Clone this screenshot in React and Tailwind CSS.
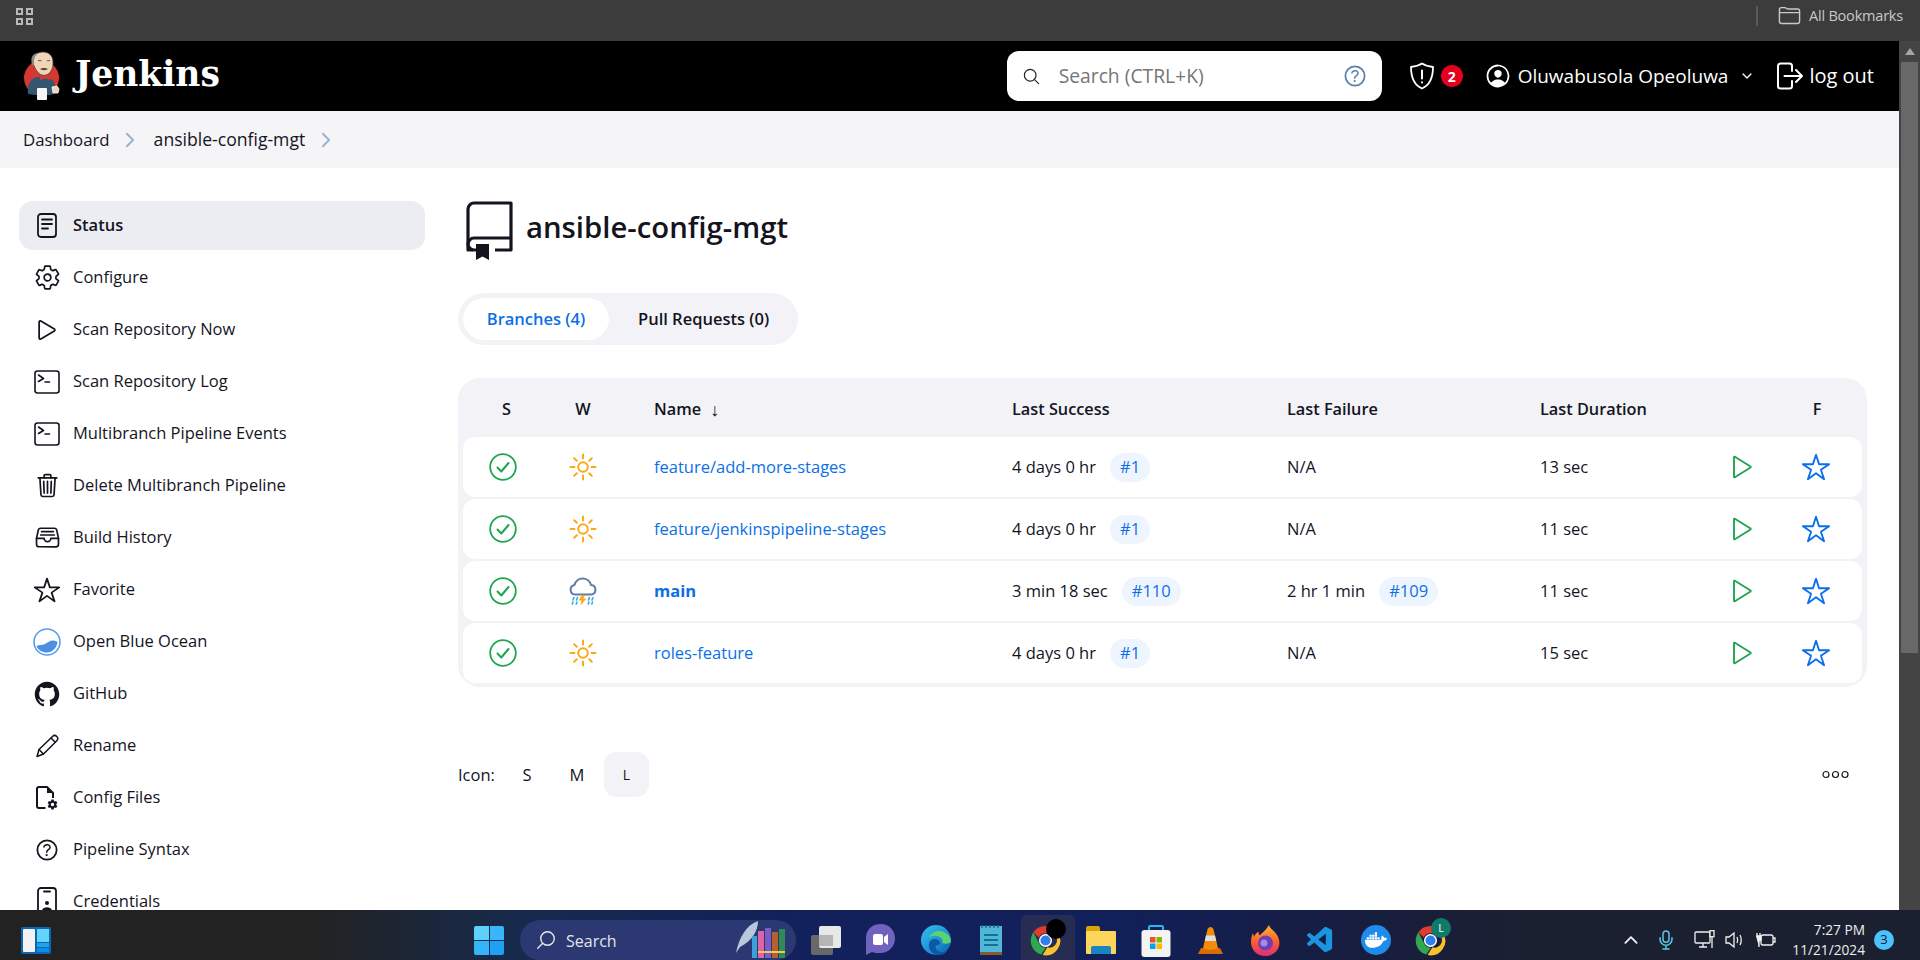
import React from "react";
import {
  IoSettingsOutline, IoPlayOutline, IoTrashOutline, IoFileTrayFullOutline, IoStarOutline,
  IoLogoGithub, IoHelpCircleOutline, IoSearchOutline, IoPersonCircleOutline,
  IoChevronDownOutline, IoChevronForwardOutline, IoSettingsSharp,
  IoMicOutline, IoChevronUpOutline, IoFolderOutline,
} from "react-icons/io5";
import { VscVscode } from "react-icons/vsc";
import { FaDocker } from "react-icons/fa";

const StatusIcon = () => (
  <svg width="20" height="25" viewBox="0 0 20 25" fill="none" stroke="#14141f" strokeWidth="1.8" strokeLinecap="round">
    <rect x="1" y="1" width="18" height="23" rx="3" />
    <path d="M5 6.5h10M5 11h10M5 15.5h6" />
  </svg>
);
const TerminalIcon = () => (
  <svg width="26" height="24" viewBox="0 0 26 24" fill="none" stroke="#14141f" strokeWidth="1.6" strokeLinecap="round" strokeLinejoin="round">
    <rect x="1" y="1" width="24" height="22" rx="2.5" />
    <path d="M4.5 5l5 3.5-5 3M11 12h4.5" />
  </svg>
);
const OceanIcon = () => (
  <svg width="28" height="28" viewBox="0 0 28 28">
    <circle cx="14" cy="14" r="13" fill="#fff" stroke="#5b9ef0" strokeWidth="1.6" />
    <path d="M3.500 18c3-1.500 5.500-.5 8.500-2s5-3.500 7.500-3.500c2 0 3.500.5 5 1.500-.5 6-5.500 10.500-10.500 10.500S5 22 3.500 18z" fill="#4d8fe0" />
  </svg>
);
const PencilIcon = () => (
  <svg width="24" height="24" viewBox="0 0 24 24" fill="none" stroke="#14141f" strokeWidth="1.500" strokeLinejoin="round" strokeLinecap="round">
    <path d="M2 22.500l2-7L17.500 2.500a3 3 0 0 1 4.300 4.200L8.500 20z" />
    <path d="M4 15.500L8.500 20M16 4l4.300 4.300" />
  </svg>
);
const ConfigFilesIcon = () => (
  <svg width="24" height="24" viewBox="0 0 24 24" fill="none">
    <path d="M10.500 22H4a2 2 0 0 1-2-2V3a2 2 0 0 1 2-2h8l6 6v5" stroke="#14141f" strokeWidth="2" strokeLinejoin="round" />
    <path d="M12 1v6h6z" fill="#14141f" />
    <foreignObject x="12" y="13" width="12" height="11"><IoSettingsSharp size={11} color="#14141f" /></foreignObject>
  </svg>
);
const CredIcon = () => (
  <svg width="20" height="30" viewBox="0 0 20 30" fill="none" stroke="#14141f" strokeWidth="1.800">
    <rect x="1" y="1" width="18" height="28" rx="3" />
    <path d="M7 4.500h6" strokeLinecap="round" />
    <circle cx="10" cy="16" r="2" fill="#14141f" stroke="none" />
    <path d="M5 24c0-5 10-5 10 0z" fill="#14141f" stroke="none" />
  </svg>
);
const RepoIcon = () => (
  <svg width="48" height="60" viewBox="0 0 48 60" fill="none" className="shrink-0">
    <path d="M8 49H3V8a6 6 0 0 1 6-6h37v47H30" stroke="#14141f" strokeWidth="3.200" strokeLinejoin="round" />
    <path d="M11 49H9a6 6 0 0 1-6-6v0a6 6 0 0 1 6-6h37" stroke="#14141f" strokeWidth="3.200" />
    <path d="M11 43h13v16l-6.500-3.500L11 59z" fill="#14141f" />
  </svg>
);
const CheckCircle = () => (
  <svg width="28" height="28" viewBox="0 0 28 28" fill="none" stroke="#1ea64f" strokeWidth="1.800" strokeLinecap="round" strokeLinejoin="round">
    <circle cx="14" cy="14" r="12.800" />
    <path d="M8.500 14.500l3.800 4 7.200-8.500" strokeWidth="2" />
  </svg>
);
const Sun = () => (
  <svg width="28" height="28" viewBox="0 0 28 28" fill="none" stroke="#fba91b" strokeWidth="2" strokeLinecap="round">
    <circle cx="14" cy="14" r="4.800" />
    <path d="M14 1.500v4M14 22.500v4M1.500 14h4M22.500 14h4M5.200 5.200l2.600 2.600M20.200 20.200l2.600 2.600M5.200 22.800l2.600-2.600M20.200 7.800l2.600-2.600" />
  </svg>
);
const Storm = () => (
  <svg width="30" height="30" viewBox="0 0 30 30" fill="none">
    <path d="M7 18.500a4.800 4.800 0 0 1-.5-9.500A8.500 8.500 0 0 1 23 9a4.800 4.800 0 0 1 .5 9.500z" stroke="#5f7ea6" strokeWidth="2" strokeLinejoin="round" />
    <path d="M14 19l-3.500 5.500h3L12.500 29.500l6-7h-3.200l1.700-3.500z" fill="#fba91b" />
    <path d="M6 21.500l-1 2.500M5 26l-.7 2M9.500 21.500l-1 2.500M9 26l-.7 2M21.500 21.500l-1 2.500M21 26l-.7 2M25 21.500l-1 2.500M24.500 26l-.7 2" stroke="#38a9e8" strokeWidth="1.600" strokeLinecap="round" />
  </svg>
);
const PlayGreen = () => (
  <svg width="20" height="24" viewBox="0 0 20 24" fill="none" stroke="#1ea64f" strokeWidth="1.900" strokeLinejoin="round">
    <path d="M2 2.200a.6.6 0 0 1 .9-.5l15.600 9.800a.6.6 0 0 1 0 1L2.900 22.300a.6.6 0 0 1-.9-.5z" />
  </svg>
);
const Dots = () => (
  <svg width="27" height="9" viewBox="0 0 27 9" fill="none" stroke="#14141f" strokeWidth="1.200" className="ml-auto mr-[18px]">
    <circle cx="4" cy="4.500" r="3" />
    <circle cx="13.500" cy="4.500" r="3" />
    <circle cx="23" cy="4.500" r="3" />
  </svg>
);
const JenkinsLogo = () => (
  <svg width="38" height="50" viewBox="0 0 38 50" className="shrink-0">
    <circle cx="17.500" cy="27" r="17.500" fill="#d33833" />
    <path d="M4 43c-1-7 1-14 8-17l12 1c5 1 7 4 7 9l-1 7c-3 1-5 1-7 1H11z" fill="#34566f" />
    <path d="M9 12C8 5 13 1 19 1s10 4 10 10c0 3 0 6-2 9-2 3-5 5-9 4-4-1-7-6-9-12z" fill="#f0d6b7" stroke="#49413b" strokeWidth=".8" />
    <path d="M9 15C6 10 7 3 13 2l1 .5C10 5 10 9 10 13z" fill="#8a8a8a" />
    <path d="M16 18c3-1.500 6-1 8 0-2 1.500-6 1.500-8 0z" fill="#49413b" />
    <path d="M14 10c1-.8 2.500-.8 3.500 0M23 10c1-.6 2-.6 3 0" stroke="#231f20" strokeWidth=".8" fill="none" />
    <path d="M16 24l5 2 5-2 .5 5-5.500-1.500L16 29z" fill="#d33833" />
    <rect x="13" y="37" width="10" height="12" rx="1" fill="#f6f6f6" />
    <path d="M28 36l5-1 2 3-1 4-5 0z" fill="#f0d6b7" stroke="#fff" strokeWidth=".8" />
  </svg>
);
const Shield = () => (
  <svg width="26" height="28" viewBox="0 0 26 28" fill="none" stroke="#fff" strokeWidth="1.800" strokeLinecap="round" strokeLinejoin="round">
    <path d="M13 1.500c3 2 6.500 3 11 3.500 0 11-3 18-11 21.500C5 23 2 16 2 5c4.500-.5 8-1.500 11-3.500z" />
    <path d="M13 8.500v8M13 20.200v.3" strokeWidth="2" />
  </svg>
);
const LogOut = () => (
  <svg width="27" height="28" viewBox="0 0 27 28" fill="none" stroke="#fff" strokeWidth="2" strokeLinecap="round" strokeLinejoin="round">
    <path d="M16 9V4a2.500 2.500 0 0 0-2.500-2.500h-9A2.500 2.500 0 0 0 2 4v20a2.500 2.500 0 0 0 2.500 2.500h9A2.500 2.500 0 0 0 16 24v-5" />
    <path d="M20 8l6 6-6 6M8.500 14H26" />
  </svg>
);

const nav = [
  ["Status", <StatusIcon />],
  ["Configure", <IoSettingsOutline size={27} color="#14141f" />],
  ["Scan Repository Now", <IoPlayOutline size={28} color="#14141f" />],
  ["Scan Repository Log", <TerminalIcon />],
  ["Multibranch Pipeline Events", <TerminalIcon />],
  ["Delete Multibranch Pipeline", <IoTrashOutline size={27} color="#14141f" />],
  ["Build History", <IoFileTrayFullOutline size={27} color="#14141f" />],
  ["Favorite", <IoStarOutline size={28} color="#14141f" />],
  ["Open Blue Ocean", <OceanIcon />],
  ["GitHub", <IoLogoGithub size={28} color="#14141f" />],
  ["Rename", <PencilIcon />],
  ["Config Files", <ConfigFilesIcon />],
  ["Pipeline Syntax", <IoHelpCircleOutline size={30} color="#14141f" />],
  ["Credentials", <CredIcon />],
];

const rows = [
  { name: "feature/add-more-stages", w: "sun", succ: "4 days 0 hr", sb: "#1", fail: "N/A", dur: "13 sec" },
  { name: "feature/jenkinspipeline-stages", w: "sun", succ: "4 days 0 hr", sb: "#1", fail: "N/A", dur: "11 sec" },
  { name: "main", bold: true, w: "storm", succ: "3 min 18 sec", sb: "#110", fail: "2 hr 1 min", fb: "#109", dur: "11 sec" },
  { name: "roles-feature", w: "sun", succ: "4 days 0 hr", sb: "#1", fail: "N/A", dur: "15 sec" },
];

const Badge = ({ children }) => (
  <span className="ml-[14px] inline-flex h-[29px] items-center rounded-full bg-[#eff5fe] px-[10px] text-[#0b6fe8]">{children}</span>
);

const cols = "grid grid-cols-[80px_80px_389px_275px_253px_172px_60px_88px] items-center";

const Table = () => (
  <div className="h-[309px] w-[1409px] rounded-[22px] bg-[#f2f2f7] px-[5px] pb-[4px]">
    <div className={`${cols} h-[59px] pt-[3px] text-[16.300px] font-semibold text-[#14141f]`}>
      <span className="pl-[7px] text-center">S</span>
      <span className="text-center">W</span>
      <span className="flex items-center gap-[9px] pl-[31px]">Name <span className="text-[18px] font-normal leading-none">↓</span></span>
      <span>Last Success</span>
      <span>Last Failure</span>
      <span>Last Duration</span>
      <span />
      <span className="pl-[2px] text-center">F</span>
    </div>
    <div className="flex flex-col gap-[2px]">
      {rows.map((r) => (
        <div key={r.name} className={`${cols} h-[60px] rounded-[12px] bg-white text-[16.500px] text-[#14141f]`}>
          <span className="flex justify-center"><CheckCircle /></span>
          <span className="flex justify-center">{r.w === "sun" ? <Sun /> : <Storm />}</span>
          <span className={`pl-[31px] text-[#0b6fe8] ${r.bold ? "font-bold" : ""}`}>{r.name}</span>
          <span className="flex items-center">{r.succ}<Badge>{r.sb}</Badge></span>
          <span className="flex items-center">{r.fail}{r.fb && <Badge>{r.fb}</Badge>}</span>
          <span>{r.dur}</span>
          <span className="flex justify-center"><PlayGreen /></span>
          <span className="flex justify-center"><IoStarOutline size={30} color="#0b6fe8" /></span>
        </div>
      ))}
    </div>
  </div>
);

const Chrome = () => (
  <svg width="31" height="31" viewBox="0 0 32 32">
    <path d="M16 1a15 15 0 0 1 13 7.500H16a7.500 7.500 0 0 0-7 4.500L3.500 7.500A15 15 0 0 1 16 1z" fill="#e33b2e" />
    <path d="M3.500 7.500L9.500 19a7.500 7.500 0 0 0 7 4.500L11.500 30.500A15 15 0 0 1 3.500 7.500z" fill="#2fa84f" />
    <path d="M29 8.500A15 15 0 0 1 13 31l5-8a7.500 7.500 0 0 0 4.500-14.500z" fill="#fbc02d" />
    <circle cx="16" cy="16" r="6" fill="#2f7fec" stroke="#fff" strokeWidth="1.500" />
  </svg>
);
const TaskCell = ({ children }) => (
  <div className="relative flex h-[40px] w-[55px] shrink-0 items-center justify-center">{children}</div>
);

const Taskbar = () => (
  <div className="flex h-[50px] shrink-0 items-center overflow-hidden bg-[linear-gradient(90deg,#222222_0%,#222222_16%,#172a4c_27%,#12205c_42%,#12205a_58%,#171d40_70%,#1b2030_80%,#1b2030_100%)] pt-[10px]">
    <div className="ml-[21px] flex h-[27px] w-[30px] shrink-0 gap-[2px] rounded-[2px] bg-[#0f66b0] p-[2px]">
      <div className="w-[12px] rounded-[1px] bg-[#f2f2f2]" />
      <div className="flex w-[12px] flex-col gap-[1px]">
        <div className="h-[13px] bg-[#63d4fb]" />
        <div className="h-[4px] bg-[#1ca4ee]" />
        <div className="h-[4px] bg-[#0b8fe6]" />
      </div>
    </div>
    <div className="ml-[423px] grid h-[29px] w-[30px] shrink-0 grid-cols-2 grid-rows-2 gap-[1px]">
      <div className="rounded-tl-[2px] bg-[#5ed0fb]" />
      <div className="rounded-tr-[2px] bg-[#37b7fa]" />
      <div className="rounded-bl-[2px] bg-[#35b4fa]" />
      <div className="rounded-br-[2px] bg-[#1ea0f4]" />
    </div>
    <div className="ml-[16px] flex h-[40px] w-[276px] shrink-0 items-start self-end rounded-full bg-[#2b3872] pl-[15px] pt-[9px]">
      <IoSearchOutline size={22} color="#e8e8ee" className="-scale-x-100" />
      <span className="ml-[9px] text-[16px] text-[#e3e5ee]">Search</span>
      <svg width="62" height="40" viewBox="0 0 62 40" className="ml-auto -mt-[9px] shrink-0">
        <path d="M2 33C5 18 12 5 24 1c0 10-6 20-18 26z" fill="#b9c7dd" />
        <rect x="18" y="16" width="5" height="22" fill="#3ba1d8" />
        <rect x="24" y="11" width="6" height="27" fill="#e063a9" />
        <rect x="31" y="8" width="6" height="30" fill="#7c5bc4" />
        <rect x="38" y="12" width="6" height="26" fill="#b5612c" />
        <rect x="45" y="9" width="6" height="29" fill="#2f8a55" />
        <rect x="24" y="31" width="27" height="2" fill="#f2c94c" />
      </svg>
    </div>
    <div className="ml-[2px] flex shrink-0">
      <TaskCell>
        <div className="relative h-[29px] w-[30px]">
          <div className="absolute bottom-0 left-0 h-[20px] w-[22px] rounded-[2px] bg-[#686868]" />
          <div className="absolute right-0 top-0 h-[22px] w-[22px] rounded-[2px] bg-[#e8e8e8]" />
          <div className="absolute left-[8px] top-[9px] h-[11px] w-[14px] bg-[#b5b5b5]" />
        </div>
      </TaskCell>
      <TaskCell>
        <svg width="29" height="33" viewBox="0 0 29 33">
          <path d="M14.500 0C6 0 0 6 0 14v17l6-3c2 1 5 1 8.500 1C23 29 29 22 29 14.500 29 6 23 0 14.500 0z" fill="#6f63bd" />
          <rect x="7" y="10" width="10" height="11" rx="2" fill="#fff" />
          <path d="M18 13l4-3v11l-4-3z" fill="#fff" />
        </svg>
      </TaskCell>
      <TaskCell>
        <svg width="30" height="30" viewBox="0 0 30 30">
          <defs>
            <linearGradient id="eg" x1="0" y1="0" x2="1" y2="1"><stop offset="0" stopColor="#35c1f1" /><stop offset=".6" stopColor="#1b8fd6" /><stop offset="1" stopColor="#0c59a4" /></linearGradient>
          </defs>
          <circle cx="15" cy="15" r="15" fill="url(#eg)" />
          <path d="M30 17c0-7-6-11-12-11-5 0-9 3-10 7 3-3 8-3 12 0 2 2 2 4 1 5 3 1 7 1 9-1z" fill="#5ed16f" />
          <path d="M18 30c-6 0-11-5-10-11 0-3 3-5 6-5 3 0 5 2 5 4 0 1-1 2-2 2-4 0-3 6 3 7 3 .5 6-1 7-2-2 3-5 5-9 5z" fill="#0c59a4" />
        </svg>
      </TaskCell>
      <TaskCell>
        <svg width="22" height="30" viewBox="0 0 22 30">
          <rect x="0" y="1" width="22" height="26" fill="#4fb7d9" />
          <rect x="0" y="27" width="22" height="3" fill="#8b5a2b" />
          <path d="M2 3V0M6 3V0M10 3V0M14 3V0M18 3V0" stroke="#17708f" strokeWidth="1.500" />
          <path d="M4 10h14M4 15h14M4 20h14" stroke="#17708f" strokeWidth="2" />
        </svg>
      </TaskCell>
      <TaskCell>
        <div className="absolute -bottom-[10px] left-[3px] right-[-2px] top-[-5px] rounded-t-[5px] bg-[#262c52]" />
        <div className="relative"><Chrome /></div>
        <div className="absolute left-[28px] top-[-1px] h-[20px] w-[20px] rounded-full bg-black" />
      </TaskCell>
      <TaskCell>
        <div className="relative h-[28px] w-[30px]">
          <div className="absolute left-0 top-0 h-[12px] w-[14px] rounded-t-[2px] bg-[#d9a406]" />
          <div className="absolute bottom-0 left-0 top-[5px] w-[30px] rounded-[1px] bg-[#fcd55c]" />
          <div className="absolute bottom-0 left-[5px] h-[8px] w-[20px] rounded-t-[2px] bg-[#1b82c4]" />
        </div>
      </TaskCell>
      <TaskCell>
        <svg width="30" height="33" viewBox="0 0 30 33">
          <path d="M8 8V3a1 1 0 0 1 1-1h12a1 1 0 0 1 1 1v5" fill="none" stroke="#2fb4ef" strokeWidth="2" />
          <rect x="0.500" y="6" width="29" height="27" rx="3" fill="#f3f3f3" />
          <rect x="9" y="13" width="5.500" height="5.500" fill="#f25022" />
          <rect x="15.500" y="13" width="5.500" height="5.500" fill="#7fba00" />
          <rect x="9" y="19.500" width="5.500" height="5.500" fill="#00a4ef" />
          <rect x="15.500" y="19.500" width="5.500" height="5.500" fill="#ffb900" />
        </svg>
      </TaskCell>
      <TaskCell>
        <svg width="25" height="29" viewBox="0 0 25 29">
          <path d="M0 28l3-6h19l3 6z" fill="#d76c07" />
          <path d="M9.500 3.500C10 0 15 0 15.500 3.500L20 22c-3 2.500-12 2.500-15 0z" fill="#f58a0b" />
          <path d="M8 9.500h9l1.200 5.500H6.800z" fill="#dfdfdf" />
        </svg>
      </TaskCell>
      <TaskCell>
        <svg width="29" height="31" viewBox="0 0 29 31">
          <defs>
            <linearGradient id="ff" x1="0" y1="0" x2="0" y2="1"><stop offset="0" stopColor="#ffb52e" /><stop offset=".55" stopColor="#ff5c2e" /><stop offset="1" stopColor="#e02c7b" /></linearGradient>
          </defs>
          <path d="M18 0c1 4 5 5 8 10 3 5 3 10 1 14-3 5-8 7-13 7C6 31 0 25 0 17c0-4 1-7 2-9l1 4c1-3 3-5 5-5-1 2 0 3 1 3 2-2 6-5 9-10z" fill="url(#ff)" />
          <circle cx="14.500" cy="18" r="7.500" fill="#6b3fb5" />
          <circle cx="13" cy="18" r="3.500" fill="#a98adf" />
        </svg>
      </TaskCell>
      <TaskCell><VscVscode size={31} color="#1b95e0" /></TaskCell>
      <TaskCell>
        <div className="flex h-[30px] w-[30px] items-center justify-center rounded-full bg-[#1f8ceb]">
          <FaDocker size={22} color="#fff" />
        </div>
      </TaskCell>
      <TaskCell>
        <Chrome />
        <div className="absolute left-[28px] top-[-2px] flex h-[20px] w-[20px] items-center justify-center rounded-full bg-[#0f7a6a] text-[10px] font-semibold text-[#cfe8e2]">L</div>
      </TaskCell>
    </div>
    <IoChevronUpOutline size={20} color="#f0f0f0" className="ml-[163px] shrink-0" />
    <IoMicOutline size={24} color="#5cc3e8" className="ml-[13px] shrink-0" />
    <svg width="21" height="20" viewBox="0 0 21 20" fill="none" stroke="#f0f0f0" strokeWidth="1.300" className="ml-[16px] shrink-0">
      <rect x="1" y="2" width="15" height="11" rx="1" />
      <path d="M5 17h8M9 13v4" />
      <rect x="16" y="0.700" width="4" height="6" fill="#1b2030" />
      <path d="M18 7v11" />
    </svg>
    <svg width="20" height="18" viewBox="0 0 20 18" fill="none" stroke="#f0f0f0" strokeWidth="1.300" className="ml-[10px] shrink-0">
      <path d="M1 6h3l5-4v14l-5-4H1zM12 6c1 2 1 4 0 6M15 4c1.500 3 1.500 7 0 10" />
    </svg>
    <svg width="20" height="16" viewBox="0 0 20 16" fill="none" stroke="#f0f0f0" strokeWidth="1.300" className="ml-[11px] shrink-0">
      <rect x="5" y="3" width="12" height="10" rx="2" />
      <path d="M17 6h2v4h-2" />
      <path d="M1 1v3M4 1v3M0 4h5v3a2 2 0 0 1-2 2v6" fill="#f0f0f0" />
    </svg>
    <div className="-ml-[1px] flex w-[90px] shrink-0 flex-col items-end text-[13.700px] leading-[20px] text-[#eeeeee]">
      <span>7:27 PM</span>
      <span>11/21/2024</span>
    </div>
    <div className="ml-[9px] flex h-[20px] w-[20px] shrink-0 items-center justify-center rounded-full bg-[#4cc2ff] text-[13px] text-[#10202c]">3</div>
  </div>
);

export default function App() {
  return (
    <div className="flex h-[960px] w-[1920px] flex-col overflow-hidden bg-white font-['Open_Sans','Noto_Sans',sans-serif] text-[#14141f]">
      {/* browser bookmark bar */}
      <div className="flex h-[41px] shrink-0 items-center bg-[#3c3c3c]">
        <div className="ml-[16px] mb-[9px] grid h-[17px] w-[17px] grid-cols-2 gap-[3px]">
          {[0, 1, 2, 3].map((i) => <div key={i} className="border-2 border-[#b8b8b8]" />)}
        </div>
        <div className="mb-[10px] ml-auto h-[20px] w-[2px] bg-[#5a5a5a]" />
        <IoFolderOutline size={23} color="#c9c9c9" className="mb-[10px] ml-[20px]" />
        <span className="mb-[9px] ml-[8px] mr-[17px] text-[14.500px] tracking-[-0.200px] text-[#c8c8c8]">All Bookmarks</span>
      </div>

      <div className="flex min-h-0 flex-1">
        <div className="flex min-w-0 flex-1 flex-col overflow-hidden">
          {/* Jenkins header */}
          <div className="flex h-[70px] shrink-0 items-center bg-black pl-[24px] pr-[25px]">
            <JenkinsLogo />
            <span className="mb-[3px] ml-[13px] font-['DejaVu_Serif',serif] text-[34.500px] font-bold leading-none text-white">Jenkins</span>
            <div className="ml-auto flex h-[50px] w-[375px] items-center rounded-[12px] bg-white pl-[15px] pr-[13px]">
              <IoSearchOutline size={19} color="#222" />
              <span className="ml-[18px] pt-[1px] text-[19.300px] text-[#767676]">Search (CTRL+K)</span>
              <IoHelpCircleOutline size={28} color="#5b7fa8" className="ml-auto" />
            </div>
            <div className="ml-[27px]"><Shield /></div>
            <div className="ml-[6px] flex h-[22px] w-[22px] items-center justify-center rounded-full bg-[#e6001f] text-[14px] font-bold text-white">2</div>
            <IoPersonCircleOutline size={28} color="#fff" className="ml-[21px]" />
            <span className="ml-[6px] text-[19px] font-medium text-white">Oluwabusola Opeoluwa</span>
            <IoChevronDownOutline size={14} color="#fff" className="ml-[12px]" />
            <div className="ml-[22px]"><LogOut /></div>
            <span className="ml-[6px] text-[20px] font-medium text-white">log out</span>
          </div>

          {/* breadcrumb */}
          <div className="flex h-[57px] shrink-0 items-center bg-[#f5f5f8] pl-[23px] text-[16.800px] font-medium">
            <span>Dashboard</span>
            <IoChevronForwardOutline size={22} color="#9fb3cc" className="ml-[9px]" />
            <span className="ml-[13px] text-[17.600px]">ansible-config-mgt</span>
            <IoChevronForwardOutline size={22} color="#9fb3cc" className="ml-[10px]" />
          </div>

          <div className="flex min-h-0 flex-1">
            {/* sidebar */}
            <div className="flex w-[458px] shrink-0 flex-col gap-[3px] pl-[19px] pt-[33px]">
              {nav.map(([label, icon], i) => (
                <div key={label} className={`flex h-[49px] w-[406px] shrink-0 items-center rounded-[14px] pl-[14px] text-[16.500px] ${i === 0 ? "bg-[#ecedf2] font-semibold" : ""}`}>
                  <span className="flex w-[28px] shrink-0 justify-center">{icon}</span>
                  <span className="ml-[12px]">{label}</span>
                </div>
              ))}
            </div>

            {/* main */}
            <div className="flex flex-1 flex-col pt-[33px]">
              <div className="flex h-[59px] items-center pl-[7px]">
                <RepoIcon />
                <h1 className="mb-[5px] ml-[13px] text-[29.300px] font-semibold leading-none">ansible-config-mgt</h1>
              </div>
              <div className="mt-[33px] flex h-[52px] w-[340px] items-center rounded-full bg-[#f2f2f7] px-[5px] text-[16.500px] font-semibold">
                <div className="flex h-[42px] w-[146px] items-center justify-center rounded-full bg-white text-[#0b6fe8]">Branches (4)</div>
                <div className="ml-[29px]">Pull Requests (0)</div>
              </div>
              <div className="mt-[33px]"><Table /></div>
              <div className="mt-[65px] flex h-[45px] w-[1409px] items-center text-[16.500px]">
                <span className="pt-[1px]">Icon:</span>
                <span className="ml-[25px] w-[14px] pt-[1px] text-center">S</span>
                <span className="ml-[34px] w-[18px] pt-[1px] text-center">M</span>
                <span className="ml-[18px] flex h-[45px] w-[45px] items-center justify-center rounded-[13px] bg-[#f2f2f7] text-[14px]">L</span>
                <Dots />
              </div>
            </div>
          </div>
        </div>

        {/* browser scrollbar */}
        <div className="flex w-[21px] shrink-0 flex-col bg-[#444444] px-[2px]">
          <div className="flex h-[21px] items-center justify-center">
            <div className="h-0 w-0 border-x-[5px] border-b-[7px] border-x-transparent border-b-[#a5a5a5]" />
          </div>
          <div className="h-[591px] bg-[#686868]" />
        </div>
      </div>

      <Taskbar />
    </div>
  );
}
